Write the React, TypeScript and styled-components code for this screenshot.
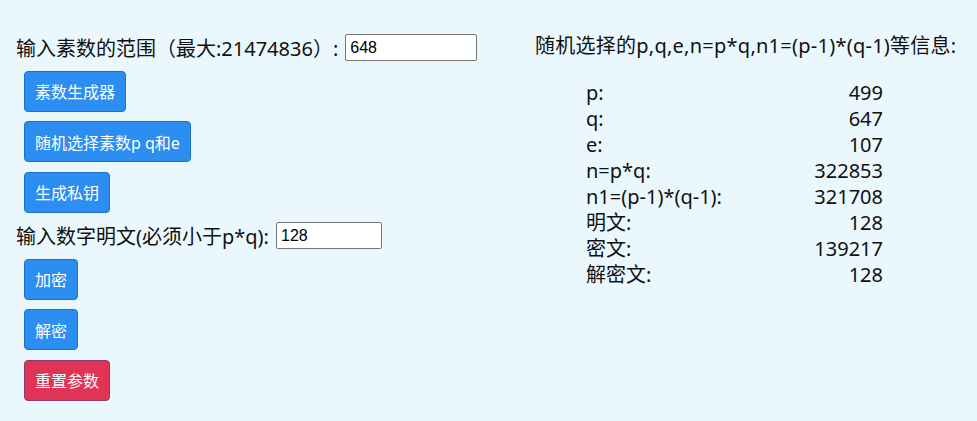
import React from 'react';
import styled, { createGlobalStyle } from 'styled-components';

const GlobalStyle = createGlobalStyle`
  html, body {
    margin: 0;
    padding: 0;
    background: #eaf8fe;
  }
  body {
    font-family: "Noto Sans", "Noto Sans CJK SC", sans-serif;
    color: #111;
  }
`;

const Page = styled.div`
  display: flex;
  width: 977px;
  height: 421px;
  box-sizing: border-box;
  padding: 34px 0 0 16px;
  overflow: hidden;
`;

const LeftColumn = styled.div`
  display: flex;
  flex-direction: column;
  align-items: flex-start;
  gap: 9.5px;
  width: 519px;
`;

const InputRow = styled.div`
  display: flex;
  align-items: center;
  height: 27px;
  font-size: 20px;
  white-space: nowrap;
`;

const NumberInput = styled.input<{ $width: number }>`
  box-sizing: border-box;
  width: ${(p) => p.$width}px;
  height: 27px;
  margin-left: 7px;
  padding: 0 4px;
  border: 1px solid #767676;
  border-radius: 2px;
  background: #fff;
  font-family: "Liberation Sans", sans-serif;
  font-size: 16px;
  color: #000;
`;

const Button = styled.button<{ $danger?: boolean }>`
  box-sizing: border-box;
  height: 41px;
  margin-left: 8px;
  padding: 0 10px;
  border: 1px solid ${(p) => (p.$danger ? '#8a3b72' : '#1f70c8')};
  border-radius: 4px;
  background: ${(p) => (p.$danger ? '#df3456' : '#2b8ef0')};
  color: #fff;
  font-family: "Noto Sans", "Noto Sans CJK SC", sans-serif;
  font-size: 16px;
  white-space: nowrap;
  cursor: pointer;
`;

const RightColumn = styled.div`
  display: flex;
  flex-direction: column;
  font-size: 20px;
`;

const Title = styled.div`
  height: 27px;
  line-height: 24px;
  letter-spacing: 0.25px;
  white-space: nowrap;
`;

const InfoTable = styled.div`
  display: grid;
  grid-template-columns: 1fr auto;
  width: 297px;
  margin: 19px 0 0 51px;
  line-height: 26px;
`;

const Label = styled.div`
  white-space: nowrap;
`;

const Value = styled.div`
  text-align: right;
`;

const info: [string, string][] = [
  ['p:', '499'],
  ['q:', '647'],
  ['e:', '107'],
  ['n=p*q:', '322853'],
  ['n1=(p-1)*(q-1):', '321708'],
  ['明文:', '128'],
  ['密文:', '139217'],
  ['解密文:', '128'],
];

const App: React.FC = () => {
  return (
    <Page>
      <GlobalStyle />
      <LeftColumn>
        <InputRow>
          输入素数的范围（最大:21474836）:
          <NumberInput $width={132} defaultValue="648" />
        </InputRow>
        <Button>素数生成器</Button>
        <Button>随机选择素数p q和e</Button>
        <Button>生成私钥</Button>
        <InputRow>
          输入数字明文(必须小于p*q):
          <NumberInput $width={106} defaultValue="128" />
        </InputRow>
        <Button>加密</Button>
        <Button>解密</Button>
        <Button $danger>重置参数</Button>
      </LeftColumn>
      <RightColumn>
        <Title>随机选择的p,q,e,n=p*q,n1=(p-1)*(q-1)等信息:</Title>
        <InfoTable>
          {info.map(([k, v]) => (
            <React.Fragment key={k}>
              <Label>{k}</Label>
              <Value>{v}</Value>
            </React.Fragment>
          ))}
        </InfoTable>
      </RightColumn>
    </Page>
  );
};

export default App;
